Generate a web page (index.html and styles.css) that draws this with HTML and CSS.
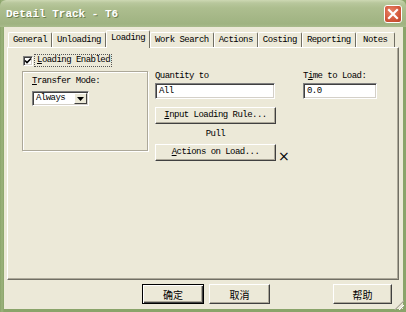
FILE: index.html
```html
<!DOCTYPE html>
<html>
<head>
<meta charset="utf-8">
<link rel="stylesheet" href="styles.css">
</head>
<body>
<div class="window">
  <div class="titlebar">
    <span class="title">Detail Track - T6</span>
    <span class="close">
      <svg width="12" height="12" viewBox="0 0 12 12"><path d="M2 2 L10 10 M10 2 L2 10" stroke="#fff" stroke-width="2.2" stroke-linecap="square"/></svg>
    </span>
  </div>
  <div class="client">
    <div class="tabs">
      <div class="tab">General</div>
      <div class="tab">Unloading</div>
      <div class="tab active">Loading</div>
      <div class="tab">Work Search</div>
      <div class="tab">Actions</div>
      <div class="tab">Costing</div>
      <div class="tab">Reporting</div>
      <div class="tab">Notes</div>
    </div>
    <div class="panel">
      <div class="check-row">
        <span class="checkbox">
          <svg width="8" height="8" viewBox="0 0 8 8"><path d="M1 3.5 L3 5.5 L7 1.5" fill="none" stroke="#000" stroke-width="1.6"/></svg>
        </span>
        <span class="focus"><u>L</u>oading Enabled</span>
      </div>
      <div class="content">
        <div class="group">
          <div class="label"><u>T</u>ransfer Mode:</div>
          <div class="combo">
            <span class="combo-text">Always</span>
            <span class="drop"><svg width="7" height="4" viewBox="0 0 7 4"><path d="M0 0 H7 L3.5 4 Z" fill="#000"/></svg></span>
          </div>
        </div>
        <div class="mid">
          <div class="label">Quantity to</div>
          <div class="edit wide">All</div>
          <div class="button rule"><u>I</u>nput Loading Rule...</div>
          <div class="pull">Pull</div>
          <div class="button-row">
            <div class="button actions"><u>A</u>ctions on Load...</div>
            <span class="xmark">×</span>
          </div>
        </div>
        <div class="right">
          <div class="label">T<u>i</u>me to Load:</div>
          <div class="edit narrow">0.0</div>
        </div>
      </div>
    </div>
    <div class="footer">
      <div class="button ok">确定</div>
      <div class="button cancel">取消</div>
      <div class="button help">帮助</div>
    </div>
    <span class="grip"></span>
  </div>
</div>
</body>
</html>
```

FILE: styles.css
```css
* { box-sizing: border-box; }
html, body { margin: 0; padding: 0; }
body {
  width: 406px;
  height: 312px;
  overflow: hidden;
  background: #ece9d8;
  font-family: "Liberation Mono", monospace;
  font-size: 9px;
  letter-spacing: -0.53px;
  color: #000;
}
u { text-decoration: underline; text-underline-offset: 1px; }

.window {
  width: 406px;
  height: 312px;
  display: flex;
  flex-direction: column;
  background: linear-gradient(90deg, #8aa46a, #9cb37c 2px, #8aa46a 4px);
}

.titlebar {
  height: 27px;
  flex: none;
  display: flex;
  align-items: center;
  padding: 0 4px 0 6px;
  background: linear-gradient(#cdd8b3 0, #b8c79c 3px, #adbe8f 8px, #a6b888 16px, #9fb381 24px, #a9bb8c 27px);
  border-radius: 6px 6px 0 0;
}
.title {
  font-family: "Liberation Mono", monospace;
  font-weight: bold;
  font-size: 11px;
  letter-spacing: 0;
  color: #fff;
  text-shadow: 1px 1px 0 #6f8150;
  flex: 1;
  margin-top: 1px;
}
.close {
  width: 18px;
  height: 18px;
  margin-top: 1px;
  border: 1px solid #fff;
  border-radius: 3px;
  background: radial-gradient(circle at 40% 35%, #e9866a, #d3573a 60%, #b8442b);
  display: flex;
  align-items: center;
  justify-content: center;
}

.client {
  flex: 1;
  margin: 0 3px 3px 4px;
  background: #ece9d8;
  padding: 4px 4px 0 3px;
  display: flex;
  flex-direction: column;
  position: relative;
}

.tabs {
  display: flex;
  height: 16px;
  padding-left: 1px;
  align-items: flex-end;
}
.tab {
  height: 15px;
  min-width: 39px;
  padding: 0 4px;
  border-top: 1px solid #fff;
  border-left: 1px solid #fff;
  border-right: 1px solid #716f64;
  border-radius: 2px 2px 0 0;
  display: flex;
  align-items: center;
  justify-content: center;
  line-height: 11px;
  padding-top: 1px;
}
.tab.active {
  height: 18px;
  margin-bottom: -1px;
  align-items: flex-start;
  padding-top: 2px;
  background: #ece9d8;
  position: relative;
  z-index: 1;
}

.panel {
  height: 233px;
  border-top: 1px solid #fff;
  border-left: 1px solid #fff;
  border-right: 1px solid #716f64;
  border-bottom: 1px solid #716f64;
  box-shadow: inset -1px -1px 0 #aca899;
  padding: 6px 0 0 14px;
}

.check-row {
  display: flex;
  align-items: center;
  height: 13px;
  margin-left: 1px;
}
.checkbox {
  width: 10px;
  height: 10px;
  background: #fff;
  border-top: 1px solid #808080;
  border-left: 1px solid #808080;
  border-right: 1px solid #fff;
  border-bottom: 1px solid #fff;
  box-shadow: inset 1px 1px 0 #404040, inset -1px -1px 0 #d4d0c8;
  display: flex;
  align-items: center;
  justify-content: center;
}
.focus {
  margin-left: 2px;
  padding: 0 1px 0 2px;
  line-height: 11px;
  outline: 1px dotted #555;
  outline-offset: 0;
}

.content {
  display: flex;
  margin-top: 4px;
}
.label {
  line-height: 11px;
  height: 11px;
}

.group {
  width: 126px;
  height: 80px;
  border: 1px solid #aca899;
  box-shadow: inset 1px 1px 0 #fff, 1px 1px 0 #fff;
  padding: 4px 0 0 9px;
}
.combo {
  margin-top: 4px;
  width: 57px;
  height: 15px;
  background: #fff;
  border-top: 1px solid #808080;
  border-left: 1px solid #808080;
  border-right: 1px solid #fff;
  border-bottom: 1px solid #fff;
  box-shadow: inset 1px 1px 0 #404040, inset -1px -1px 0 #d4d0c8;
  display: flex;
  align-items: center;
  padding: 1px 1px 1px 3px;
}
.combo-text { flex: 1; line-height: 11px; }
.drop {
  width: 13px;
  height: 11px;
  background: #ece9d8;
  border-top: 1px solid #fff;
  border-left: 1px solid #fff;
  border-right: 1px solid #404040;
  border-bottom: 1px solid #404040;
  display: flex;
  align-items: center;
  justify-content: center;
}

.mid {
  width: 121px;
  margin-left: 7px;
  display: flex;
  flex-direction: column;
}
.right {
  width: 74px;
  margin-left: 27px;
  display: flex;
  flex-direction: column;
}
.edit {
  margin-top: 1px;
  height: 16px;
  background: #fff;
  border-top: 1px solid #808080;
  border-left: 1px solid #808080;
  border-right: 1px solid #fff;
  border-bottom: 1px solid #fff;
  box-shadow: inset 1px 1px 0 #404040, inset -1px -1px 0 #d4d0c8;
  padding: 0 0 0 3px;
  line-height: 14px;
}
.edit.wide { width: 120px; }
.edit.narrow { width: 74px; }

.button {
  height: 17px;
  background: #ece9d8;
  border-top: 1px solid #fff;
  border-left: 1px solid #fff;
  border-right: 1px solid #404040;
  border-bottom: 1px solid #404040;
  box-shadow: inset -1px -1px 0 #aca899;
  display: flex;
  align-items: center;
  justify-content: center;
  line-height: 11px;
}
.button.rule { margin-top: 8px; width: 121px; }
.pull {
  height: 20px;
  line-height: 11px;
  padding-top: 5px;
  text-align: center;
}
.button-row {
  display: flex;
  align-items: flex-end;
}
.button.actions { width: 121px; flex: none; }
.xmark {
  font-family: "DejaVu Sans", sans-serif;
  font-size: 14px;
  letter-spacing: 0;
  line-height: 10px;
  margin-left: 2px;
}

.footer {
  display: flex;
  padding: 4px 7px 0 135px;
  gap: 5px;
}
.footer .button {
  height: 20px;
  font-family: "Noto Sans CJK SC", sans-serif;
  font-size: 10px;
  letter-spacing: 0;
}
.button.ok {
  width: 62px;
  border: 1px solid #000;
  box-shadow: inset 1px 1px 0 #fff, inset -1px -1px 0 #404040, inset -2px -2px 0 #aca899;
}
.button.cancel { width: 61px; }
.button.help { width: 59px; margin-left: auto; }

.grip {
  position: absolute;
  right: -1px;
  bottom: -1px;
  width: 10px;
  height: 10px;
  background: repeating-linear-gradient(135deg, transparent 0 2px, #fff 2px 3px, #aca899 3px 4px);
  clip-path: polygon(100% 0, 100% 100%, 0 100%);
}
```
